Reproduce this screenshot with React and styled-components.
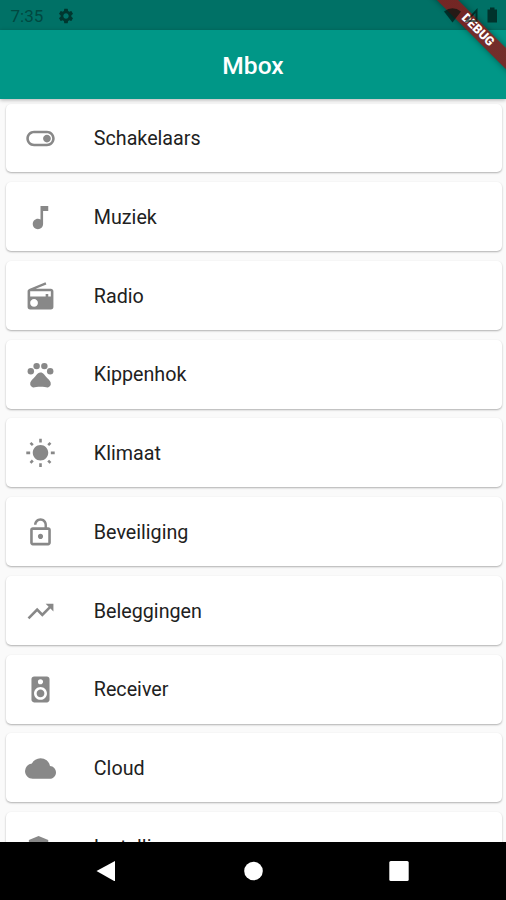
import React from 'react'
import styled, { createGlobalStyle } from 'styled-components'
import {
  MdOutlineToggleOn,
  MdMusicNote,
  MdRadio,
  MdPets,
  MdWbSunny,
  MdLockOpen,
  MdTrendingUp,
  MdSpeaker,
  MdCloud,
  MdAdminPanelSettings,
  MdSettings,
} from 'react-icons/md'

const GlobalStyle = createGlobalStyle`
    * {
        box-sizing: border-box;
    }
    body {
        margin: 0;
        font-family: Roboto, "Liberation Sans", sans-serif;
    }
`

const Screen = styled.div`
    position: relative;
    display: flex;
    flex-direction: column;
    height: 900px;
    overflow: hidden;
    background-color: #fafafa;
`

const StatusBar = styled.div`
    display: flex;
    flex: none;
    align-items: center;
    height: 29.5px;
    padding: 2px 8px 0 10.5px;
    background-color: #007166;
    color: #014840;
    font-size: 17px;
    z-index: 1;
`

const StatusGear = styled(MdSettings)`
    margin-left: 14px;
    font-size: 18px;
    color: #00372f;
`

const AppBar = styled.header`
    display: flex;
    flex: none;
    align-items: center;
    justify-content: center;
    height: 69px;
    padding-top: 3px;
    background-color: #009787;
    box-shadow: 0 1px 4px rgba(0, 0, 0, 0.3);
    z-index: 1;
`

const Title = styled.h1`
    margin: 0;
    color: #fff;
    font-size: 24.6px;
    font-weight: 500;
`

const List = styled.ul`
    display: flex;
    flex: 1;
    flex-direction: column;
    gap: 9.85px;
    min-height: 0;
    margin: 0;
    padding: 5px 4px 0 5.5px;
    overflow: hidden;
    list-style: none;
`

const Card = styled.li`
    display: flex;
    flex: none;
    align-items: center;
    gap: 38px;
    height: 68.9px;
    padding: 1.6px 19.3px 0;
    border-radius: 5px;
    background-color: #fff;
    box-shadow: 0 1px 2px rgba(0, 0, 0, 0.3);
    color: #212121;
    font-size: 19.7px;

    svg {
        flex: none;
        font-size: 31px;
        color: #888;
    }
`

const NavBar = styled.nav`
    display: flex;
    flex: none;
    align-items: center;
    justify-content: space-between;
    height: 58.5px;
    padding: 0 97px 0 96px;
    background-color: #000;
    z-index: 1;
`

const NavIcon = styled.svg`
    width: 20px;
    height: 20px;
    fill: #fff;
`

const RibbonCorner = styled.div`
    position: absolute;
    top: 0;
    right: 0;
    width: 90px;
    height: 90px;
    overflow: hidden;
    z-index: 2;
`

// the red is translucent over its own shadow
const Ribbon = styled.div`
    position: absolute;
    top: 22.2px;
    left: 0.9px;
    width: 120px;
    height: 14.8px;
    padding-left: 2px;
    background-color: rgba(0, 0, 0, 0.5);
    background-image: linear-gradient(rgba(183, 28, 28, 0.63), rgba(183, 28, 28, 0.63));
    box-shadow: 0 0 6px rgba(0, 0, 0, 0.4);
    transform: rotate(45deg);
    color: #fff;
    font-size: 12.5px;
    font-weight: 900;
    line-height: 14px;
    text-align: center;
`

// stays above the debug ribbon
const SystemOverlay = styled.div`
    position: absolute;
    top: 7px;
    right: 8px;
    display: flex;
    z-index: 3;
`

const SystemIcons = styled.svg`
    width: 54px;
    height: 18px;
    fill: rgba(0, 20, 16, 0.68);
`

const items = [
  { label: 'Schakelaars', Icon: MdOutlineToggleOn },
  { label: 'Muziek', Icon: MdMusicNote },
  { label: 'Radio', Icon: MdRadio },
  { label: 'Kippenhok', Icon: MdPets },
  { label: 'Klimaat', Icon: MdWbSunny },
  { label: 'Beveiliging', Icon: MdLockOpen },
  { label: 'Beleggingen', Icon: MdTrendingUp },
  { label: 'Receiver', Icon: MdSpeaker },
  { label: 'Cloud', Icon: MdCloud },
  { label: 'Instellingen', Icon: MdAdminPanelSettings },
]

function App() {
  return (
    <Screen>
        <GlobalStyle />
        <StatusBar>
            7:35
            <StatusGear />
        </StatusBar>
        <AppBar>
            <Title>Mbox</Title>
        </AppBar>
        <List>
            {items.map(({ label, Icon }) => (
                <Card key={label}>
                    <Icon />
                    {label}
                </Card>
            ))}
        </List>
        <NavBar>
            <NavIcon viewBox="0 0 20 20"><path d="M0.500 10L19 0v20.500z" /></NavIcon>
            <NavIcon viewBox="0 0 20 20"><circle cx="10.5" cy="10" r="9.3" /></NavIcon>
            <NavIcon viewBox="0 0 20 20"><rect x="0.3" width="19.4" height="20" rx="1.5" /></NavIcon>
        </NavBar>
        <RibbonCorner>
            <Ribbon>DEBUG</Ribbon>
        </RibbonCorner>
        <SystemOverlay>
            <SystemIcons viewBox="0 0 54 18">
                <path d="M0 4.500Q8.500 -2 17 4.500L8.500 15.500z" />
                <path d="M33.500 1v14H20.500z M31.500 6l-6.500 7h6.500z" fillRule="evenodd" />
                <path d="M43.500 2.500h2.500V0.500h4.500v2H53V15.500h-9.500z" />
            </SystemIcons>
        </SystemOverlay>
    </Screen>
  )
}

export default App;
